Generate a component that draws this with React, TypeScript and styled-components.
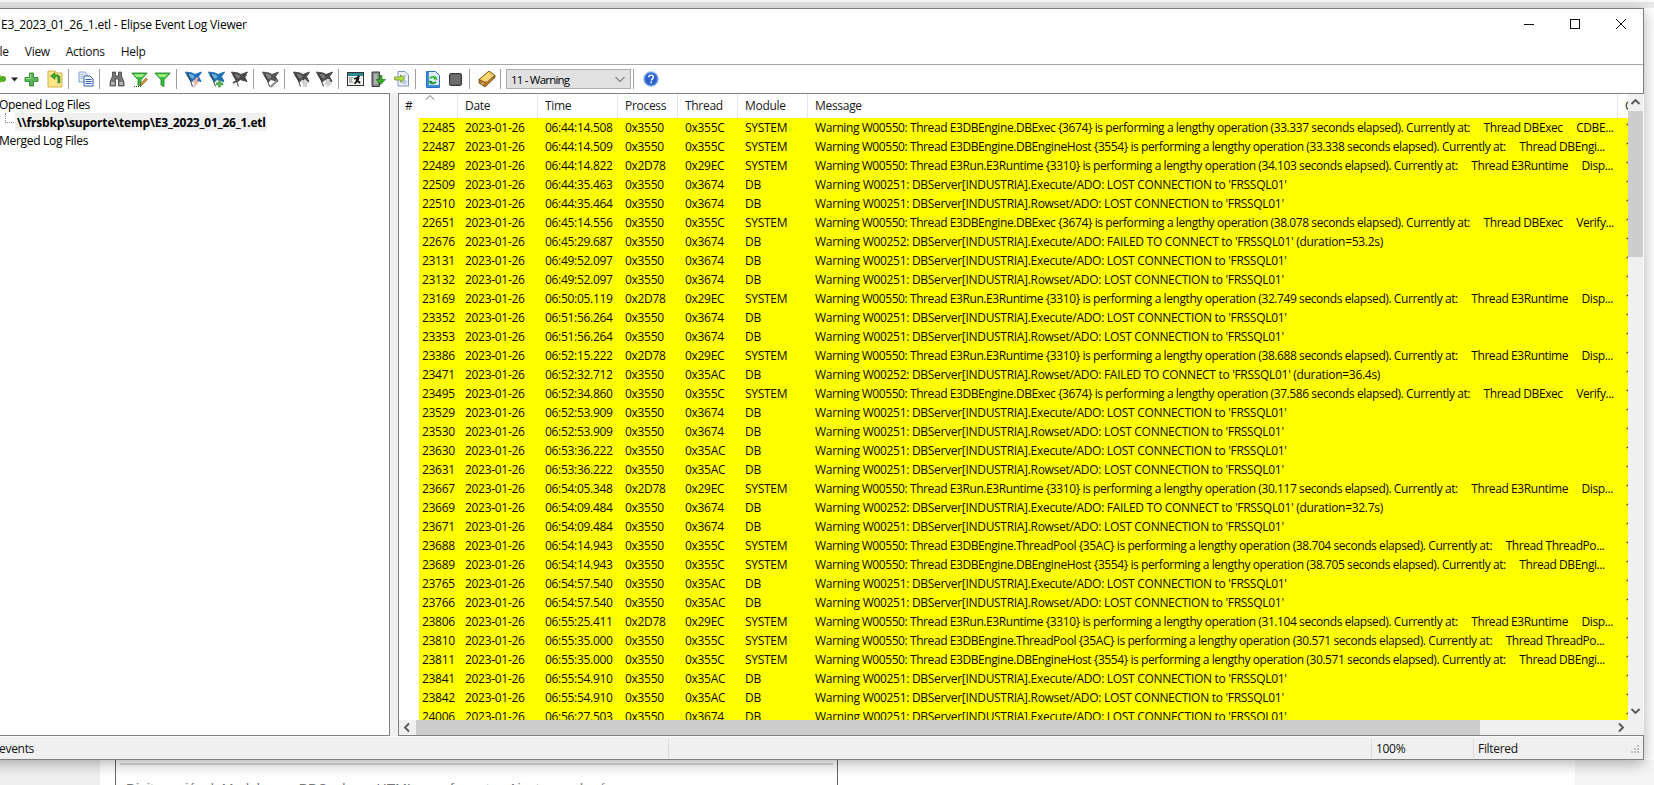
import React from "react";
import styled, { createGlobalStyle } from "styled-components";

const Global = createGlobalStyle`
  html, body { margin: 0; padding: 0; background: #fff; }
  body { font-family: "Open Sans", "Noto Sans", sans-serif; font-size: 12px; color: #000; letter-spacing: -0.3px; }
  * { box-sizing: border-box; }
`;

const Desktop = styled.div`width: 1654px; height: 785px; overflow: hidden; display: flex; flex-direction: column; background: #fff;`;
const TopStrip = styled.div`height: 8px; flex: none; background: linear-gradient(#fbfbfb 0 2px, #e6e6e6 2px, #eeeeee);`;
const Window = styled.div`
  position: relative; z-index: 1; flex: none; width: 1664px; height: 752px; margin-left: -20px;
  border: 1px solid #7f7f7f; background: #fff; display: flex; flex-direction: column;
  box-shadow: 0 3px 14px rgba(0,0,0,.32);
`;
const TitleBar = styled.div`height: 33px; flex: none; display: flex; align-items: center; padding: 0 0 3px 20px;`;
const TitleText = styled.div`flex: 1; font-size: 12px; letter-spacing: -0.19px;`;
const WinButton = styled.div`width: 46px; height: 30px; padding-left: 2px; display: flex; align-items: center; justify-content: center;`;
const MenuBar = styled.div`height: 23px; flex: none; display: flex; align-items: center; gap: 16px; padding: 0 0 3px 10px; border-bottom: 1px solid #a6a6a6;`;
const MenuItem = styled.span`color: #111;`;
const Toolbar = styled.div`height: 28px; flex: none; display: flex; align-items: center; padding-left: 9px;`;
const ToolButton = styled.div<{ $w?: number }>`
  width: ${p => p.$w ?? 23}px; height: 24px; flex: none; display: flex; align-items: center; justify-content: center;
`;
const Sep = styled.div`width: 1px; height: 20px; flex: none; margin: 0 5px 0 2px; background: #a0a0a0;`;
const Combo = styled.div`
  width: 125px; height: 20px; flex: none; border: 1px solid #adadad; background: #e1e1e1;
  display: flex; align-items: center; justify-content: space-between; padding: 0 4px 0 4px;
  font-size: 11.5px; letter-spacing: -0.8px;
`;
const Main = styled.div`flex: 1; min-height: 0; display: flex; background: #f0f0f0;`;
const TreePane = styled.div`
  width: 409px; flex: none; background: #fff; border: solid #808080; border-width: 1px 1px 1px 0; padding: 1px 0 0 18px;
`;
const TreeRow = styled.div`height: 18px; display: flex; align-items: center;`;
const TreeConnector = styled.div`
  width: 9px; height: 10px; flex: none; margin: -9px 1px 0 6px; border: dotted #8a8a8a; border-width: 0 0 1px 1px;
`;
const TreeSelected = styled.div`
  background: #f0f0f0; font-weight: 700; height: 18px; display: flex; align-items: center; padding: 0 2px; width: 252px;
  white-space: nowrap; letter-spacing: -0.18px;
`;
const ListPane = styled.div`
  width: 1246px; margin-left: 8px; flex: none; background: #fff; border: solid #808080; border-width: 1px 0 1px 1px;
  display: flex; flex-direction: column; min-height: 0;
`;
const ListBody = styled.div`flex: 1; min-height: 0; display: flex;`;
const ListColumn = styled.div`width: 1229px; flex: none; display: flex; flex-direction: column; min-height: 0;`;
const COLS = "20px 39px 80px 80px 60px 60px 70px 810px 10px";
const HeaderRow = styled.div`height: 24px; flex: none; display: grid; grid-template-columns: 59px 80px 80px 60px 60px 70px 810px 10px; position: relative;`;
const HeaderCell = styled.div<{ $pad?: number }>`
  padding: 0 0 1px ${p => p.$pad ?? 7}px; display: flex; align-items: center; border-right: 1px solid #e5e5e5; overflow: hidden; white-space: nowrap; color: #1a1a1a;
  &:last-child { border-right: 0; }
`;
const SortCaret = styled.svg`position: absolute; left: 25px; top: 0;`;
const Rows = styled.div`flex: 1; min-height: 0; overflow: hidden;`;
const Row = styled.div`height: 19px; display: grid; grid-template-columns: ${COLS}; white-space: nowrap;`;
const Gutter = styled.div`background: #fff;`;
const Cell = styled.div<{ $pad?: number; $tight?: boolean }>`
  background: #ffff00; padding-left: ${p => p.$pad ?? 7}px; line-height: 19px; overflow: hidden; white-space: pre; color: #100800;
  letter-spacing: ${p => (p.$tight ? "-0.42px" : "-0.3px")};
`;
const VScroll = styled.div`width: 15px; flex: none; background: #f0f0f0; display: flex; flex-direction: column;`;
const ScrollArrow = styled.div<{ $w?: number; $h?: number }>`
  width: ${p => p.$w ?? 15}px; height: ${p => p.$h ?? 17}px; flex: none; display: flex; align-items: center; justify-content: center;
`;
const VThumb = styled.div`height: 146px; flex: none; background: #cdcdcd;`;
const Fill = styled.div`flex: 1;`;
const HScroll = styled.div`height: 15px; flex: none; display: flex; background: #f0f0f0;`;
const HThumb = styled.div`width: 1064px; flex: none; background: #cdcdcd;`;
const StatusBar = styled.div`height: 23px; flex: none; background: #f0f0f0; display: flex; align-items: stretch; padding-top: 1px; border-top: 1px solid #fafafa;`;
const StatusCell = styled.div<{ $w?: number; $pad?: number }>`
  width: ${p => (p.$w ? `${p.$w}px` : "auto")}; flex: ${p => (p.$w ? "none" : "1")}; margin: 1px 0; padding-left: ${p => p.$pad ?? 4}px; display: flex; align-items: center;
  border-right: 1px solid #d9d9d9; color: #111;
  &:last-of-type { border-right: 0; }
`;
const Grip = styled.svg`align-self: flex-end; margin: 0 1px 1px auto; flex: none;`;
const Behind = styled.div`flex: 1; display: flex; min-height: 0; overflow: hidden; font-family: "Liberation Sans", sans-serif; letter-spacing: 0;`;
const SideShade = styled.div<{ $w: number; $c: string }>`width: ${p => p.$w}px; flex: none; background: ${p => p.$c};`;
const Card = styled.div`width: 723px; flex: none; border: solid #666; border-width: 0 1px; padding: 3px 4px 0;`;
const CardRule = styled.div`height: 2px; background: #dcdcdc;`;
const CardText = styled.div`margin: 16px 0 0 6px; font-size: 14px; color: #777; white-space: nowrap;`;

const Flag: React.FC<{ c: string; h: string; children?: React.ReactNode }> = ({ c, h, children }) => (
  <svg width="17" height="17" viewBox="0 0 17 17">
    <path d="M.5 1 7 2 10 3.500 16.500 1 13.500 5.500 16 10.500 9 8.500 6.500 11 3 6Z" fill={c} stroke={c} strokeWidth="1" strokeLinejoin="round" />
    <path d="M3 2.500 7 3.500 9.500 5 8 8 5.500 6.500Z" fill={h} />
    <path d="M2.500 2 7.500 15.500" stroke="#3a3a3a" strokeWidth="1" />
    {children}
  </svg>
);

const Funnel: React.FC<{ children?: React.ReactNode }> = ({ children }) => (
  <svg width="17" height="17" viewBox="0 0 17 17">
    <path d="M.8 2h15.400L10 8.800V15.500L7 14V8.800Z" fill="#3cc23c" stroke="#17751c" strokeWidth=".8" strokeLinejoin="round" />
    <path d="M3 3.200h11L11 6H5.500Z" fill="#a4ee8a" />
    {children}
  </svg>
);

const Icons = {
  arrow: (
    <svg width="16" height="16" viewBox="0 0 16 16"><path d="M3 4.500h5l4 3.500-4 3.500H3Z" fill="#e0b21e" stroke="#6b8a10" strokeWidth=".8" /><circle cx="11" cy="8" r="3" fill="#4caf28" /></svg>
  ),
  caret: <svg width="8" height="16" viewBox="0 0 8 16"><path d="M0 6.500h7L3.500 10.500Z" fill="#222" /></svg>,
  plus: (
    <svg width="15" height="15" viewBox="0 0 15 15"><path d="M5.500 1h4v4.500H14v4H9.500V14h-4V9.500H1v-4h4.500Z" fill="#58b558" stroke="#2f8a33" strokeWidth=".9" /><path d="M6.600 2v4.500H2" fill="none" stroke="#a6dfa0" /></svg>
  ),
  folder: (
    <svg width="16" height="18" viewBox="0 0 16 18"><path d="M1 1h7l2 2h5v14H1Z" fill="#fde58a" stroke="#c9a93c" strokeWidth=".9" /><path d="M13 13V7.500C13 5 10 4.500 8 5V2.500L3.500 6 8 9.500V7c2-.5 2.800 0 2.800 1v5Z" fill="#3aa82b" stroke="#1f7118" strokeWidth=".5" /></svg>
  ),
  copy: (
    <svg width="16" height="16" viewBox="0 0 16 16"><path d="M1 1h6l2 2v8H1Z" fill="#e8effa" stroke="#7f9fd6" /><path d="M6 5h6l3 3v7H6Z" fill="#fff" stroke="#2f5fb0" /><path d="M7.500 8.500h6M7.500 10.500h6M7.500 12.500h6" stroke="#2f5fb0" /><path d="M2.500 3.500h3M2.500 5.500h3M2.500 7.500h3" stroke="#9db7e2" /></svg>
  ),
  binoculars: (
    <svg width="16" height="16" viewBox="0 0 16 16"><path d="M3.500 1h3v4h3V1h3v4L15 11v4H9.500V8h-3v7H1v-4l2.500-6Z" fill="#777" stroke="#333" strokeWidth=".7" /><path d="M2 11h3.500v3H2ZM10.500 11H14v3h-3.500Z" fill="#b5b5b5" /></svg>
  ),
  filterEdit: (
    <Funnel>
      <path d="M9.500 13 15 7l1.500 1.500L11 14l-2 .5Z" fill="#e89038" stroke="#7a4a1c" strokeWidth=".6" />
      <path d="M3 15.500h5" stroke="#333" strokeDasharray="1 1" />
    </Funnel>
  ),
  filter: <Funnel />,
  flagBolt: <Flag c="#1f70b4" h="#6fb0e0"><path d="M11.500 6.500 8 11.500h2.500L8.500 16.500 14 10.500h-2.500L13.500 6.500Z" fill="#f2c078" stroke="#d98bd0" strokeWidth=".5" /></Flag>,
  flagPlus: <Flag c="#1f70b4" h="#6fb0e0"><path d="M10.500 9.500h2.200v2.200h2.200v2.200h-2.200v2.200h-2.200v-2.200H8.300v-2.200h2.200Z" fill="#58b558" stroke="#2f8a33" strokeWidth=".5" /></Flag>,
  flagX: <Flag c="#4a4a4a" h="#7a7a7a"><path d="M2 12 15.500 4" stroke="#4a4a4a" strokeWidth="1.500" /></Flag>,
  flagEdit: <Flag c="#555" h="#888"><path d="M9 14.500 14.500 9l1.300 1.300L10.300 15.800l-2 .4Z" fill="#999" stroke="#666" strokeWidth=".5" /></Flag>,
  flagUp: <Flag c="#4a4a4a" h="#7a7a7a"><path d="M12 8l3.500 3.500h-2v4h-3v-4h-2Z" fill="#d8d8d8" stroke="#aaa" strokeWidth=".5" /></Flag>,
  flagDown: <Flag c="#4a4a4a" h="#7a7a7a"><path d="M10.500 8h3v4h2L12 15.500 8.500 12h2Z" fill="#d8d8d8" stroke="#aaa" strokeWidth=".5" /></Flag>,
  run: (
    <svg width="17" height="16" viewBox="0 0 17 16"><rect x=".5" y="1.500" width="16" height="13" fill="#f4f4ee" stroke="#333" /><rect x="1" y="2" width="15" height="3" fill="#2a8f95" /><path d="M2 7h4M2 9h3M2 11h4" stroke="#777" /><path d="M10.500 6l2 1-1 2.500 2 1.500-.5 2-2.500-2-2 2-2-.5 2-2 .5-2.500-2 .5v-1.500l3-1Z" fill="#111" /><circle cx="11.500" cy="5.500" r="1.200" fill="#111" /></svg>
  ),
  importDoc: (
    <svg width="15" height="17" viewBox="0 0 15 17"><path d="M1 1h7.500v14.500H1Z" fill="#7f8580" stroke="#3c3c3c" /><path d="M3 2.500h3.500v11H3Z" fill="#aeb3ae" /><path d="M8.500 4.500h2.500V8.500H14.500L9.800 13.500 5 8.500h3.500Z" fill="#32a928" stroke="#1c6b16" strokeWidth=".6" /></svg>
  ),
  exportDoc: (
    <svg width="15" height="16" viewBox="0 0 15 16"><path d="M4 .5h7l3.500 3.500v11H4Z" fill="#eef2fa" stroke="#7f93b8" /><path d="M7.500 10h5M7.500 12h5M9 5h3" stroke="#8aa0c6" /><path d="M.5 6h6V3.800L11 7.500 6.500 11.200V9h-6Z" fill="#b6dd4e" stroke="#5f8a1e" strokeWidth=".7" /></svg>
  ),
  refresh: (
    <svg width="14" height="17" viewBox="0 0 14 17">
      <path d="M.5.500h9l4 4v12H.5Z" fill="#dcecfb" stroke="#2a70c0" />
      <path d="M1 1h2v15H1ZM3 14h10v2H3Z" fill="#3f8ed8" />
      <path d="M10.500 8A3.800 3.800 0 0 0 4 7.500" fill="none" stroke="#2fb82f" strokeWidth="1.800" />
      <path d="M9 4.500l2.500 4.500-4-.8Z" fill="#2fb82f" />
      <path d="M3.500 10A3.800 3.800 0 0 0 10 10.800" fill="none" stroke="#1f9a2a" strokeWidth="1.800" />
      <path d="M5 14 2.500 9.500l4 .8Z" fill="#1f9a2a" />
    </svg>
  ),
  stop: <svg width="13" height="13" viewBox="0 0 13 13"><rect x=".5" y=".5" width="12" height="12" rx="1.500" fill="#5f5f5f" stroke="#3c3c3c" /><rect x="2" y="2" width="9" height="9" fill="#6e6e6e" /></svg>,
  tape: (
    <svg width="18" height="18" viewBox="0 0 18 18"><path d="M1 9.500 11 1l6 4.500-10 10Z" fill="#f3c752" stroke="#6b4a10" strokeWidth=".9" /><path d="M1 9.500v3.500l6 4 10-9.500V5.500l-10 7Z" fill="#b77a2a" stroke="#6b4a10" strokeWidth=".8" /><path d="M4 9.500l7-6M6 11l7-6M8.500 11.500l6-5.500" stroke="#fff3b8" strokeWidth="1" /><circle cx="4.500" cy="13.500" r="1.300" fill="#fde8a0" stroke="#6b4a10" strokeWidth=".5" /></svg>
  ),
  help: (
    <svg width="16" height="16" viewBox="0 0 16 16"><circle cx="8" cy="8" r="7.300" fill="#3f7fe0" stroke="#a9c3ee" /><circle cx="8" cy="8" r="5.600" fill="#2a5fcc" /><path d="M5.800 6.300C5.800 4.800 7 4.200 8.100 4.200c1.400 0 2.300.8 2.300 1.900 0 1.800-2 1.700-2 3.300" fill="none" stroke="#fff" strokeWidth="1.500" /><rect x="7.400" y="10.500" width="1.700" height="1.700" fill="#fff" /></svg>
  ),
};

const Chevron: React.FC<{ d: "up" | "down" | "left" | "right" }> = ({ d }) => {
  const p = { up: "M2.500 8 6.500 4l4 4", down: "M2.500 4l4 4 4-4", left: "M8 2.500 4 6.500l4 4", right: "M5 2.500l4 4-4 4" }[d];
  return <svg width="13" height="13" viewBox="0 0 13 13"><path d={p} fill="none" stroke="#555" strokeWidth="1.800" /></svg>;
};

const GAP = "     ";
const lengthy = (thread: string, secs: string, tail: string) =>
  `Warning W00550: Thread ${thread} is performing a lengthy operation (${secs} seconds elapsed). Currently at:${GAP}${tail}`;
const lost = (k: string) => `Warning W00251: DBServer[INDUSTRIA].${k}/ADO: LOST CONNECTION to 'FRSSQL01'`;
const failed = (k: string, d: string) => `Warning W00252: DBServer[INDUSTRIA].${k}/ADO: FAILED TO CONNECT to 'FRSSQL01' (duration=${d})`;

const EXEC = "E3DBEngine.DBExec {3674}";
const HOST = "E3DBEngine.DBEngineHost {3554}";
const RUN = "E3Run.E3Runtime {3310}";
const POOL = "E3DBEngine.ThreadPool {35AC}";
const T_HOST = "Thread DBEngi...";
const T_RUN = `Thread E3Runtime${GAP}Disp...`;
const T_POOL = "Thread ThreadPo...";
const T_VER = `Thread DBExec${GAP}Verify...`;

type R = [string, string, string, string, string, string];
const S = "SYSTEM";
const rows: R[] = [
  ["22485", "06:44:14.508", "0x3550", "0x355C", S, lengthy(EXEC, "33.337", `Thread DBExec${GAP}CDBE...`)],
  ["22487", "06:44:14.509", "0x3550", "0x355C", S, lengthy(HOST, "33.338", T_HOST)],
  ["22489", "06:44:14.822", "0x2D78", "0x29EC", S, lengthy(RUN, "34.103", T_RUN)],
  ["22509", "06:44:35.463", "0x3550", "0x3674", "DB", lost("Execute")],
  ["22510", "06:44:35.464", "0x3550", "0x3674", "DB", lost("Rowset")],
  ["22651", "06:45:14.556", "0x3550", "0x355C", S, lengthy(EXEC, "38.078", T_VER)],
  ["22676", "06:45:29.687", "0x3550", "0x3674", "DB", failed("Execute", "53.2s")],
  ["23131", "06:49:52.097", "0x3550", "0x3674", "DB", lost("Execute")],
  ["23132", "06:49:52.097", "0x3550", "0x3674", "DB", lost("Rowset")],
  ["23169", "06:50:05.119", "0x2D78", "0x29EC", S, lengthy(RUN, "32.749", T_RUN)],
  ["23352", "06:51:56.264", "0x3550", "0x3674", "DB", lost("Execute")],
  ["23353", "06:51:56.264", "0x3550", "0x3674", "DB", lost("Rowset")],
  ["23386", "06:52:15.222", "0x2D78", "0x29EC", S, lengthy(RUN, "38.688", T_RUN)],
  ["23471", "06:52:32.712", "0x3550", "0x35AC", "DB", failed("Rowset", "36.4s")],
  ["23495", "06:52:34.860", "0x3550", "0x355C", S, lengthy(EXEC, "37.586", T_VER)],
  ["23529", "06:52:53.909", "0x3550", "0x3674", "DB", lost("Execute")],
  ["23530", "06:52:53.909", "0x3550", "0x3674", "DB", lost("Rowset")],
  ["23630", "06:53:36.222", "0x3550", "0x35AC", "DB", lost("Execute")],
  ["23631", "06:53:36.222", "0x3550", "0x35AC", "DB", lost("Rowset")],
  ["23667", "06:54:05.348", "0x2D78", "0x29EC", S, lengthy(RUN, "30.117", T_RUN)],
  ["23669", "06:54:09.484", "0x3550", "0x3674", "DB", failed("Execute", "32.7s")],
  ["23671", "06:54:09.484", "0x3550", "0x3674", "DB", lost("Rowset")],
  ["23688", "06:54:14.943", "0x3550", "0x355C", S, lengthy(POOL, "38.704", T_POOL)],
  ["23689", "06:54:14.943", "0x3550", "0x355C", S, lengthy(HOST, "38.705", T_HOST)],
  ["23765", "06:54:57.540", "0x3550", "0x35AC", "DB", lost("Execute")],
  ["23766", "06:54:57.540", "0x3550", "0x35AC", "DB", lost("Rowset")],
  ["23806", "06:55:25.411", "0x2D78", "0x29EC", S, lengthy(RUN, "31.104", T_RUN)],
  ["23810", "06:55:35.000", "0x3550", "0x355C", S, lengthy(POOL, "30.571", T_POOL)],
  ["23811", "06:55:35.000", "0x3550", "0x355C", S, lengthy(HOST, "30.571", T_HOST)],
  ["23841", "06:55:54.910", "0x3550", "0x35AC", "DB", lost("Execute")],
  ["23842", "06:55:54.910", "0x3550", "0x35AC", "DB", lost("Rowset")],
  ["24006", "06:56:27.503", "0x3550", "0x3674", "DB", lost("Execute")],
];

const Tool: React.FC<{ i: keyof typeof Icons; w?: number }> = ({ i, w }) => <ToolButton $w={w}>{Icons[i]}</ToolButton>;

export default function App() {
  return (
    <Desktop>
      <Global />
      <TopStrip />
      <Window>
        <TitleBar>
          <TitleText>E3_2023_01_26_1.etl - Elipse Event Log Viewer</TitleText>
          <WinButton><svg width="12" height="12" viewBox="0 0 12 12"><path d="M1 6.500h10" stroke="#111" /></svg></WinButton>
          <WinButton><svg width="12" height="12" viewBox="0 0 12 12"><rect x="1.500" y="1.500" width="9" height="9" fill="none" stroke="#111" /></svg></WinButton>
          <WinButton><svg width="12" height="12" viewBox="0 0 12 12"><path d="M1 1l10 10M11 1 1 11" stroke="#111" /></svg></WinButton>
        </TitleBar>
        <MenuBar>
          <MenuItem>File</MenuItem>
          <MenuItem>View</MenuItem>
          <MenuItem>Actions</MenuItem>
          <MenuItem>Help</MenuItem>
        </MenuBar>
        <Toolbar>
          <Tool i="arrow" w={20} />
          <Tool i="caret" w={10} />
          <Tool i="plus" />
          <Tool i="folder" />
          <Sep />
          <Tool i="copy" />
          <Sep />
          <Tool i="binoculars" />
          <Tool i="filterEdit" />
          <Tool i="filter" />
          <Sep />
          <Tool i="flagBolt" />
          <Tool i="flagPlus" />
          <Tool i="flagX" />
          <Sep />
          <Tool i="flagEdit" />
          <Sep />
          <Tool i="flagUp" />
          <Tool i="flagDown" />
          <Sep />
          <Tool i="run" />
          <Tool i="importDoc" />
          <Tool i="exportDoc" />
          <Sep />
          <Tool i="refresh" />
          <Tool i="stop" />
          <Sep />
          <Tool i="tape" />
          <Sep />
          <Combo>
            <span>11 - Warning</span>
            <svg width="12" height="12" viewBox="0 0 12 12"><path d="M1.500 4 6 8.500 10.500 4" fill="none" stroke="#444" /></svg>
          </Combo>
          <Sep />
          <Tool i="help" />
        </Toolbar>
        <Main>
          <TreePane>
            <TreeRow>Opened Log Files</TreeRow>
            <TreeRow>
              <TreeConnector />
              <TreeSelected>\\frsbkp\suporte\temp\E3_2023_01_26_1.etl</TreeSelected>
            </TreeRow>
            <TreeRow>Merged Log Files</TreeRow>
          </TreePane>
          <ListPane>
            <ListBody>
              <ListColumn>
                <HeaderRow>
                  <HeaderCell $pad={6}>#</HeaderCell>
                  <SortCaret width="12" height="6" viewBox="0 0 12 6"><path d="M2 5.500 6 1.500l4 4" fill="none" stroke="#666" /></SortCaret>
                  <HeaderCell>Date</HeaderCell>
                  <HeaderCell>Time</HeaderCell>
                  <HeaderCell>Process</HeaderCell>
                  <HeaderCell>Thread</HeaderCell>
                  <HeaderCell>Module</HeaderCell>
                  <HeaderCell>Message</HeaderCell>
                  <HeaderCell>Count</HeaderCell>
                </HeaderRow>
                <Rows>
                  {rows.map(r => (
                    <Row key={r[0]}>
                      <Gutter />
                      <Cell $pad={3}>{r[0]}</Cell>
                      <Cell>2023-01-26</Cell>
                      <Cell>{r[1]}</Cell>
                      <Cell>{r[2]}</Cell>
                      <Cell>{r[3]}</Cell>
                      <Cell>{r[4]}</Cell>
                      <Cell $tight={r[4] === S}>{r[5]}</Cell>
                      <Cell>1</Cell>
                    </Row>
                  ))}
                </Rows>
              </ListColumn>
              <VScroll>
                <ScrollArrow><Chevron d="up" /></ScrollArrow>
                <VThumb />
                <Fill />
                <ScrollArrow><Chevron d="down" /></ScrollArrow>
              </VScroll>
            </ListBody>
            <HScroll>
              <ScrollArrow $w={17} $h={15}><Chevron d="left" /></ScrollArrow>
              <HThumb />
              <Fill />
              <ScrollArrow $w={17} $h={15}><Chevron d="right" /></ScrollArrow>
              <ScrollArrow $w={15} $h={15} />
            </HScroll>
          </ListPane>
        </Main>
        <StatusBar>
          <StatusCell $pad={18}>events</StatusCell>
          <StatusCell $w={703} />
          <StatusCell $w={102}>100%</StatusCell>
          <StatusCell $w={152}>Filtered</StatusCell>
          <Grip width="16" height="16" viewBox="0 0 16 16"><path d="M11 3h2v2h-2ZM8 6h2v2H8ZM11 6h2v2h-2ZM5 9h2v2H5ZM8 9h2v2H8ZM11 9h2v2h-2Z" fill="#bdbdbd" /></Grip>
        </StatusBar>
      </Window>
      <Behind>
        <SideShade $w={100} $c="#efefef" />
        <SideShade $w={15} $c="#fff" />
        <Card>
          <CardRule />
          <CardText>Digite variável. Modelagem BBC, chave HTML para formatar. Ajuste o rodapé</CardText>
        </Card>
        <Fill />
        <SideShade $w={79} $c="#f5f5f5" />
      </Behind>
    </Desktop>
  );
}
